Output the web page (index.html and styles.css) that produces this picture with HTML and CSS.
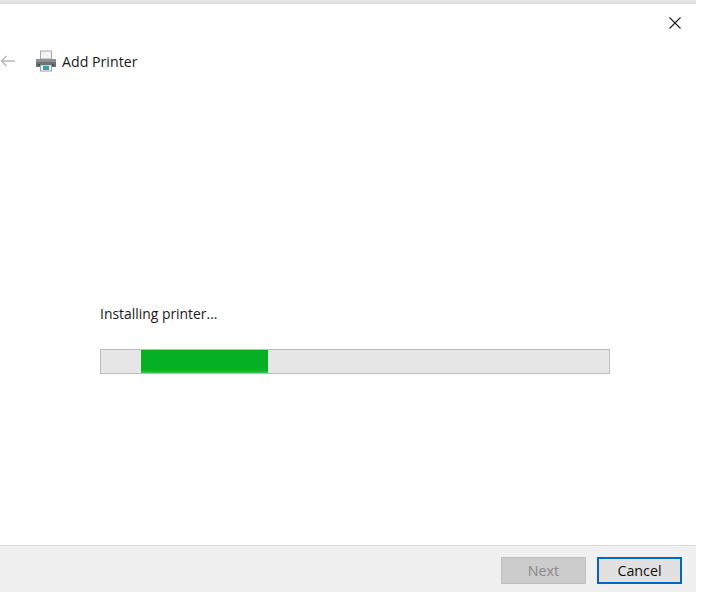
FILE: index.html
```html
<!DOCTYPE html>
<html lang="en">
<head>
<meta charset="utf-8">
<title>Add Printer</title>
<link rel="stylesheet" href="styles.css">
</head>
<body>
<div class="window">
  <div class="topline"></div>
  <div class="titlebar">
    <svg class="close" width="14" height="14" viewBox="0 0 14 14" aria-hidden="true"><path d="M1.5 1.5 L12.5 12.5 M12.5 1.5 L1.5 12.5" stroke="#1a1a1a" stroke-width="1.1" fill="none"/></svg>
  </div>
  <div class="header">
    <svg class="back" width="16" height="12" viewBox="0 0 16 12" aria-hidden="true"><path d="M15 6 H1.5 M6.5 1 L1.5 6 L6.5 11" stroke="#b8b8b8" stroke-width="1.5" fill="none"/></svg>
    <svg class="printer" width="22" height="22" viewBox="0 0 22 22" aria-hidden="true">
      <rect x="5.5" y="1" width="11" height="8" fill="#f4f4f4" stroke="#a8a8a8"/>
      <path d="M2 9.5 H20 L21 11 V17 H1 V11 Z" fill="#6f7375"/>
      <rect x="1" y="9" width="20" height="3" fill="#8d9092"/>
      <rect x="3" y="14" width="16" height="1.5" fill="#45484a"/>
      <rect x="5.5" y="15" width="11" height="6" fill="#eef4f4" stroke="#9aa4a6"/>
      <rect x="8" y="16" width="6" height="4" fill="#3f9ea4"/>
    </svg>
    <span class="title">Add Printer</span>
  </div>
  <main class="content">
    <p class="status">Installing printer...</p>
    <div class="track"><div class="fill"></div></div>
  </main>
  <footer class="footer">
    <button class="btn btn-disabled" type="button" disabled>Next</button>
    <button class="btn btn-focus" type="button">Cancel</button>
  </footer>
</div>
</body>
</html>
```

FILE: styles.css
```css
html, body {
  margin: 0;
  padding: 0;
  background: #fff;
}
body {
  width: 714px;
  height: 601px;
  overflow: hidden;
  font-family: "Open Sans", "Noto Sans", sans-serif;
  color: #1a1a1a;
}
.window {
  width: 696px;
  height: 592px;
  display: flex;
  flex-direction: column;
  background: #fff;
}
.topline {
  height: 4px;
  background: linear-gradient(#e8e8e8, #dcdcdc);
  flex: none;
}
.titlebar {
  height: 34px;
  flex: none;
  display: flex;
  justify-content: flex-end;
  align-items: flex-start;
  padding: 12px 14px 0 0;
  box-sizing: border-box;
}
.header {
  height: 46px;
  flex: none;
  display: flex;
  align-items: center;
  font-size: 14.2px;
}
.back {
  margin-right: 19px;
}
.printer {
  margin-right: 5px;
}
.content {
  flex: 1;
  padding: 0 86px 0 100px;
  display: flex;
  flex-direction: column;
}
.status {
  margin: 220px 0 0;
  font-size: 13.9px;
  line-height: 20px;
}
.track {
  margin-top: 25px;
  height: 23px;
  border: 1px solid #bcbcbc;
  background: #e6e6e6;
  padding-left: 40px;
}
.fill {
  width: 127px;
  height: 100%;
  background: linear-gradient(#06b025 88%, #3cc455);
}
.footer {
  height: 47px;
  flex: none;
  box-sizing: border-box;
  border-top: 1px solid #dfdfdf;
  background: #f0f0f0;
  display: flex;
  justify-content: flex-end;
  align-items: center;
  gap: 11px;
  padding: 2px 14px 0 0;
}
.btn {
  width: 85px;
  height: 27px;
  box-sizing: border-box;
  font: 14.3px "Open Sans", "Noto Sans", sans-serif;
  padding: 0;
}
.btn-disabled {
  background: #cccccc;
  border: 1px solid #bfbfbf;
  color: #8a8a8a;
}
.btn-focus {
  background: #e1e1e1;
  border: 2px solid #0067c0;
  color: #111;
}
```
